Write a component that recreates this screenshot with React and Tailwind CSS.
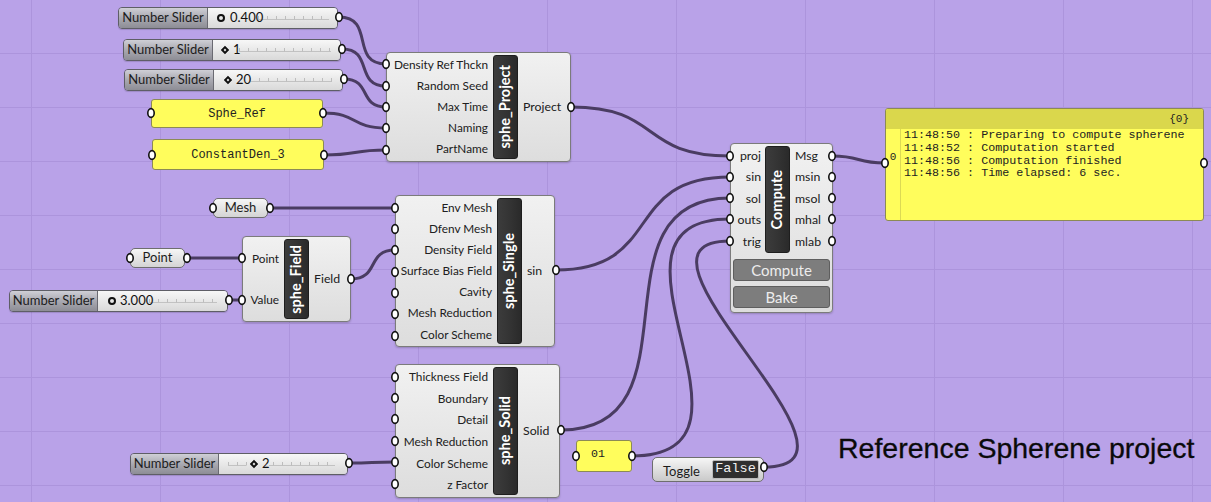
const WIRE = '#4a3c62'

const wire = (a, b, k = 0.55) => {
  const d = Math.hypot(b[0] - a[0], b[1] - a[1]) * k
  return `M${a[0]},${a[1]} C${a[0] + d},${a[1]} ${b[0] - d},${b[1]} ${b[0]},${b[1]}`
}

const WIRES = [
  [[339, 17], [386, 64]],
  [[342, 49], [386, 86]],
  [[344, 79], [386, 107]],
  [[323, 113], [386, 128]],
  [[324, 155], [386, 150]],
  [[571, 107], [730, 156]],
  [[270, 208], [395, 208]],
  [[187, 258], [242, 258]],
  [[229, 300], [242, 300]],
  [[351, 279], [395, 250]],
  [[556, 270], [730, 177]],
  [[561, 430], [730, 198], 0.5],
  [[349, 463], [395, 462]],
  [[632, 456], [730, 219], 0.6],
  [[764, 467], [730, 241], 0.56],
  [[832, 156], [885, 163]],
]

const GRIPS = [
  [339, 17], [342, 49], [344, 79], [229, 300], [349, 463],
  [151, 113], [323, 113], [152, 155], [324, 155],
  [386, 64], [386, 86], [386, 107], [386, 128], [386, 150], [571, 107],
  [213, 208], [270, 208], [130, 258], [187, 258],
  [242, 258], [242, 300], [351, 279],
  [395, 208], [395, 229], [395, 250], [395, 272], [395, 293], [395, 314], [395, 336], [556, 270],
  [395, 377], [395, 398], [395, 419], [395, 441], [395, 462], [395, 484], [561, 430],
  [730, 156], [730, 177], [730, 198], [730, 219], [730, 241],
  [832, 156], [832, 177], [832, 198], [832, 219], [832, 241],
  [885, 163], [1204, 163], [576, 456], [632, 456], [764, 467],
]

const VLINES = [31, 160, 289, 418, 547, 676, 805, 934, 1063, 1192]
const HLINES = [53, 107, 161, 215, 269, 323, 377, 431, 485]

function Ticks({ from, to, gapFrom, gapTo }) {
  const marks = []
  for (let x = from; x <= to; x += 9) {
    if (gapFrom && x > gapFrom && x < gapTo) continue
    marks.push(x)
  }
  return (
    <svg className="absolute inset-0" width="100%" height="100%">
      {gapFrom ? (
        <>
          <line x1={from} y1="11.5" x2={gapFrom} y2="11.5" stroke="#c2c2c2" />
          <line x1={gapTo} y1="11.5" x2={to} y2="11.5" stroke="#c2c2c2" />
        </>
      ) : (
        <line x1={from} y1="11.5" x2={to} y2="11.5" stroke="#c2c2c2" />
      )}
      {marks.map(x => (
        <line key={x} x1={x + 0.5} y1="8" x2={x + 0.5} y2="11.5" stroke="#bdbdbd" />
      ))}
    </svg>
  )
}

function Marker({ round }) {
  return round
    ? <span className="w-[8px] h-[8px] rounded-full border-2 border-[#111] shrink-0" />
    : <span className="w-[6px] h-[6px] rotate-45 border-2 border-[#111] shrink-0 mx-[1px]" />
}

function Slider({ className, labelW, children }) {
  return (
    <div className={`absolute flex h-[22px] rounded-[4px] border border-[#5e5e66] overflow-hidden shadow-[0_1px_1px_rgba(0,0,0,0.15)] ${className}`}>
      <div className={`${labelW} flex items-center justify-center bg-linear-to-b from-[#cfcfd6] via-[#a9a9b1] to-[#8d8d95] border-r border-[#6a6a72] text-[13px] text-[#1c1c1c]`}>
        Number Slider
      </div>
      <div className="relative flex-1 flex items-center bg-linear-to-b from-[#f7f7f7] to-[#d9d9d9] text-[13px] text-[#111]">
        {children}
      </div>
    </div>
  )
}

function Comp({ className, leftW, rightW, inputs, outputs, name }) {
  return (
    <div className={`absolute flex rounded-[4px] border border-[#7b7b7b] bg-linear-to-b from-[#f1f1f1] to-[#dddddd] shadow-[0_1px_2px_rgba(0,0,0,0.2)] ${className}`}>
      <div className={`${leftW} flex flex-col justify-around py-[1px] pr-[5px] text-right text-[11.8px] text-[#202020] leading-none whitespace-nowrap`}>
        {inputs.map(i => <span key={i}>{i}</span>)}
      </div>
      <div className="w-[25px] py-[2px]">
        <div className="h-full rounded-[3px] border border-[#1e1e1e] bg-linear-to-r from-[#3c3c3c] via-[#343434] to-[#2a2a2a] flex items-center justify-center">
          <span className="[writing-mode:vertical-rl] rotate-180 text-white font-bold text-[14.5px] leading-none">{name}</span>
        </div>
      </div>
      <div className={`${rightW} flex flex-col justify-around pl-[5px] text-[12.3px] text-[#202020] leading-none`}>
        {outputs.map(o => <span key={o}>{o}</span>)}
      </div>
    </div>
  )
}

function Param({ className, label }) {
  return (
    <div className={`absolute h-[20px] w-[55px] flex items-center justify-center rounded-[5px] border border-[#6e6e6e] bg-linear-to-b from-[#f6f6f6] to-[#d4d4d4] text-[13px] text-[#1c1c1c] ${className}`}>
      {label}
    </div>
  )
}

function Panel({ className, text }) {
  return (
    <div className={`absolute flex items-center justify-center bg-[#fffd5c] border border-[#8c8a55] rounded-[3px] font-['Liberation_Mono',monospace] text-[12px] text-[#222] ${className}`}>
      {text}
    </div>
  )
}

export default function App() {
  return (
    <div className="relative w-[1211px] h-[502px] overflow-hidden bg-[#b9a2e8] font-['Lato',sans-serif]">
      {/* grid and wires */}
      <svg className="absolute inset-0" width="1211" height="502">
        {VLINES.map(x => <line key={'v' + x} x1={x + 0.5} y1="0" x2={x + 0.5} y2="502" stroke="#ac94dc" />)}
        {HLINES.map(y => <line key={'h' + y} x1="0" y1={y + 0.5} x2="1211" y2={y + 0.5} stroke="#ac94dc" />)}
        {WIRES.map(([a, b, k], i) => (
          <path key={i} d={wire(a, b, k)} fill="none" stroke={WIRE} strokeWidth="3" strokeLinecap="round" />
        ))}
      </svg>

      {/* sliders */}
      <Slider className="left-[118px] top-[7px] w-[220px]" labelW="w-[89px]">
        <Ticks from={50} to={121} />
        <span className="relative flex items-center gap-[5px] pl-[9px]"><Marker round />0.400</span>
      </Slider>
      <Slider className="left-[123px] top-[39px] w-[218px]" labelW="w-[89px]">
        <Ticks from={26} to={118} />
        <span className="relative flex items-center gap-[4px] pl-[8px]"><Marker />1</span>
      </Slider>
      <Slider className="left-[124px] top-[69px] w-[219px]" labelW="w-[89px]">
        <Ticks from={36} to={118} />
        <span className="relative flex items-center gap-[4px] pl-[10px]"><Marker />20</span>
      </Slider>
      <Slider className="left-[9px] top-[290px] w-[219px]" labelW="w-[88px]">
        <Ticks from={51} to={119} />
        <span className="relative flex items-center gap-[4px] pl-[10px]"><Marker round />3.000</span>
      </Slider>
      <Slider className="left-[130px] top-[453px] w-[218px]" labelW="w-[88px]">
        <Ticks from={9} to={116} gapFrom={27} gapTo={50} />
        <span className="relative flex items-center gap-[4px] pl-[31px]"><Marker />2</span>
      </Slider>

      {/* text panels */}
      <Panel className="left-[151px] top-[99px] w-[172px] h-[29px]" text="Sphe_Ref" />
      <Panel className="left-[152px] top-[139px] w-[172px] h-[31px]" text="ConstantDen_3" />
      <div className="absolute left-[576px] top-[440px] w-[56px] h-[32px] bg-[#fffd5c] border border-[#8c8a55] rounded-[3px] font-['Liberation_Mono',monospace] text-[11.6px] text-[#222] pl-[14px] pt-[7px] leading-none">
        01
      </div>

      <Param className="left-[213px] top-[198px]" label="Mesh" />
      <Param className="left-[130px] top-[248px]" label="Point" />

      {/* components */}
      <Comp className="left-[386px] top-[52px] w-[185px] h-[110px]" leftW="w-[106px]" rightW="flex-1"
        inputs={['Density Ref Thckn', 'Random Seed', 'Max Time', 'Naming', 'PartName']} outputs={['Project']} name="sphe_Project" />
      <Comp className="left-[242px] top-[236px] w-[109px] h-[86px]" leftW="w-[41px]" rightW="flex-1"
        inputs={['Point', 'Value']} outputs={['Field']} name="sphe_Field" />
      <Comp className="left-[395px] top-[195px] w-[160px] h-[152px]" leftW="w-[101px]" rightW="flex-1"
        inputs={['Env Mesh', 'Dfenv Mesh', 'Density Field', 'Surface Bias Field', 'Cavity', 'Mesh Reduction', 'Color Scheme']} outputs={['sin']} name="sphe_Single" />
      <Comp className="left-[395px] top-[364px] w-[165px] h-[134px]" leftW="w-[97px]" rightW="flex-1"
        inputs={['Thickness Field', 'Boundary', 'Detail', 'Mesh Reduction', 'Color Scheme', 'z Factor']} outputs={['Solid']} name="sphe_Solid" />

      {/* compute */}
      <div className="absolute left-[730px] top-[143px] w-[103px] h-[170px] flex flex-col rounded-[4px] border border-[#7b7b7b] bg-linear-to-b from-[#f1f1f1] to-[#dddddd] shadow-[0_1px_2px_rgba(0,0,0,0.2)]">
        <div className="flex h-[109px]">
          <div className="w-[34px] flex flex-col justify-around pt-[1px] pr-[4px] text-right text-[12.3px] text-[#202020] leading-none">
            {['proj', 'sin', 'sol', 'outs', 'trig'].map(i => <span key={i}>{i}</span>)}
          </div>
          <div className="w-[25px] pt-[2px]">
            <div className="h-full rounded-[3px] border border-[#1e1e1e] bg-linear-to-r from-[#3c3c3c] via-[#343434] to-[#2a2a2a] flex items-center justify-center">
              <span className="[writing-mode:vertical-rl] rotate-180 text-white font-bold text-[14.5px] leading-none">Compute</span>
            </div>
          </div>
          <div className="flex-1 flex flex-col justify-around pt-[1px] pl-[5px] text-[12.3px] text-[#202020] leading-none">
            {['Msg', 'msin', 'msol', 'mhal', 'mlab'].map(o => <span key={o}>{o}</span>)}
          </div>
        </div>
        <div className="flex flex-col gap-[5px] px-[2px] pt-[6px]">
          <div className="h-[22px] flex items-center justify-center rounded-[3px] border border-[#5e5e5e] bg-[#7d7d7d] text-[#ececec] text-[15px]">Compute</div>
          <div className="h-[22px] flex items-center justify-center rounded-[3px] border border-[#5e5e5e] bg-[#7d7d7d] text-[#ececec] text-[15px]">Bake</div>
        </div>
      </div>

      {/* message panel */}
      <div className="absolute left-[885px] top-[108px] w-[319px] h-[113px] flex flex-col bg-[#fffd5c] border border-[#8c8a55] rounded-[3px] font-['Liberation_Mono',monospace] text-[#222] overflow-hidden">
        <div className="h-[20px] shrink-0 bg-[#dad74c] flex items-center justify-end pr-[14px] text-[11px]">{'{0}'}</div>
        <div className="flex flex-1">
          <div className="w-[15px] border-r border-[#dcd954] text-[11px] text-center pt-[20px]">0</div>
          <div className="pl-[3px] text-[11.7px] leading-[12.8px] whitespace-pre">
            <div>11:48:50 : Preparing to compute spherene</div>
            <div>11:48:52 : Computation started</div>
            <div>11:48:56 : Computation finished</div>
            <div>11:48:56 : Time elapsed: 6 sec.</div>
          </div>
        </div>
      </div>

      {/* toggle */}
      <div className="absolute left-[652px] top-[457px] w-[112px] h-[25px] flex items-center rounded-[5px] border border-[#6e6e6e] bg-linear-to-b from-[#f6f6f6] to-[#c9c9c9]">
        <span className="pl-[10px] w-[59px] pt-[4px] text-[13px] text-[#1c1c1c]">Toggle</span>
        <span className="h-[19px] w-[47px] flex items-center justify-center rounded-[2px] border border-[#bdbdbd] bg-[#2f2f2f] text-[#f0f0f0] font-['Liberation_Mono',monospace] text-[13.5px]">False</span>
      </div>

      <div className="absolute left-[838px] top-[434px] text-[28.5px] leading-none text-[#0a0a0a] font-['Liberation_Sans',sans-serif] [-webkit-text-stroke:0.3px_#0a0a0a]">
        Reference Spherene project
      </div>

      {/* grips */}
      <svg className="absolute inset-0 pointer-events-none" width="1211" height="502">
        {GRIPS.map(([x, y], i) => (
          <ellipse key={i} cx={x} cy={y} rx="3.2" ry="4.4" fill="#fff" stroke="#111" strokeWidth="1.6" />
        ))}
      </svg>
    </div>
  )
}
